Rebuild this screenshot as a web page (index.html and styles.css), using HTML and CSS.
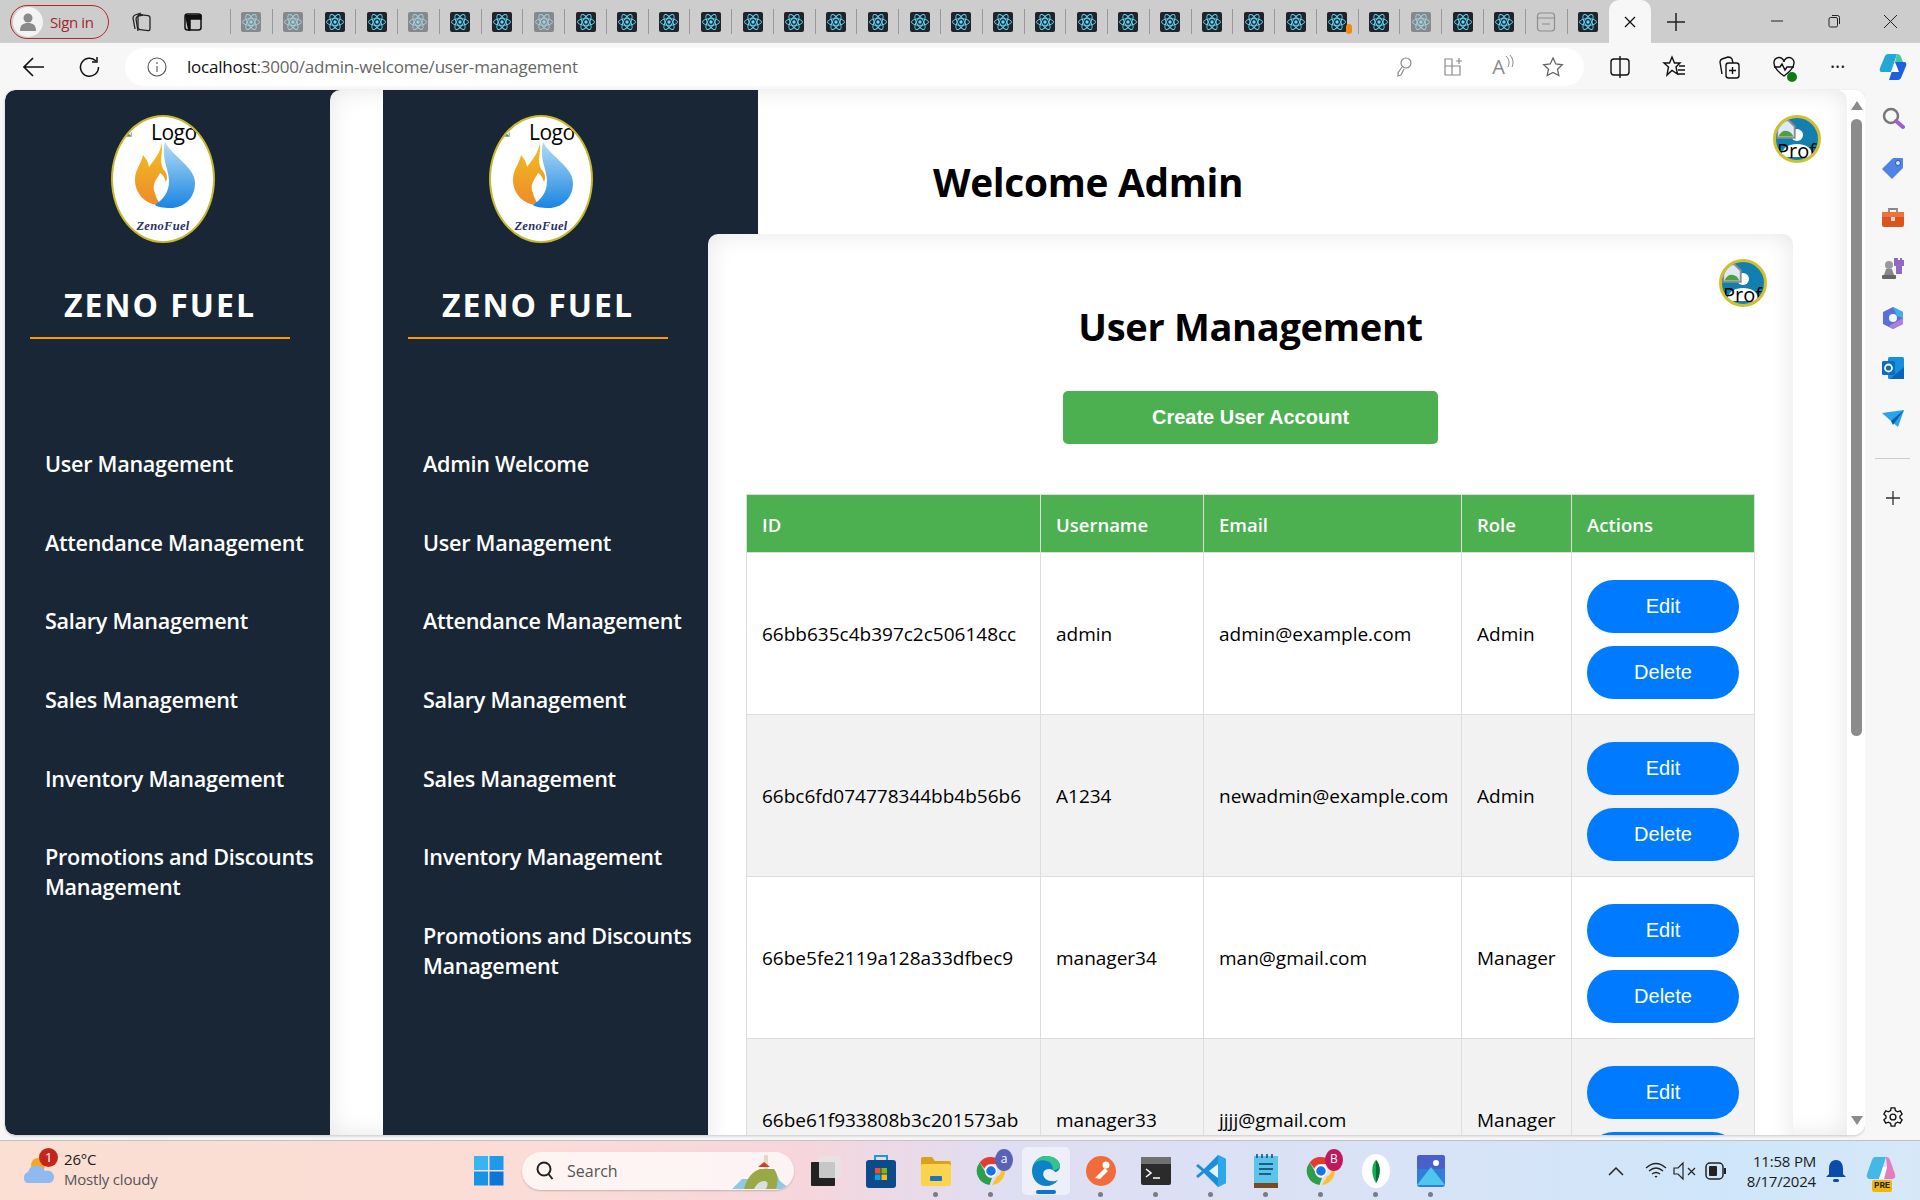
FILE: index.html
```html
<!DOCTYPE html>
<html lang="en">
<head>
    <meta charset="UTF-8">
    <title>User Management</title>
    <link rel="stylesheet" href="styles.css">
</head>
<body>
    <svg class="defs" width="0" height="0">
        <defs>
            <symbol id="react" viewBox="0 0 20 20">
                <rect width="20" height="20" rx="2" fill="#20232a"/>
                <g fill="none" stroke="#61dafb" stroke-width="0.9">
                    <ellipse cx="10" cy="10" rx="8.5" ry="3.4"/>
                    <ellipse cx="10" cy="10" rx="8.5" ry="3.4" transform="rotate(60 10 10)"/>
                    <ellipse cx="10" cy="10" rx="8.5" ry="3.4" transform="rotate(120 10 10)"/>
                </g>
                <circle cx="10" cy="10" r="1.7" fill="#61dafb"/>
            </symbol>
            <symbol id="chrome" viewBox="0 0 32 32">
                <path d="M16 2a14 14 0 0 1 12.1 7H16a7 7 0 0 0-6.6 4.6L4.7 7.4A14 14 0 0 1 16 2z" fill="#e33b2e"/>
                <path d="M28.1 9A14 14 0 0 1 17 30l5-8.5A7 7 0 0 0 22.5 9z" fill="#fbc02d"/>
                <path d="M4.7 7.4 10 16.500a7 7 0 0 0 7 6.5L14.5 29.900A14 14 0 0 1 4.7 7.4z" fill="#2e9e48"/>
                <circle cx="16" cy="16" r="5.5" fill="#1a73e8" stroke="#fff" stroke-width="1.5"/>
            </symbol>
            <symbol id="flame-logo" viewBox="0 0 104 128">
                <defs>
                    <linearGradient id="fire" x1="0" y1="0" x2="0" y2="1">
                        <stop offset="0" stop-color="#f0c020"/>
                        <stop offset="1" stop-color="#ee8a2a"/>
                    </linearGradient>
                    <linearGradient id="water" x1="0" y1="0" x2="0" y2="1">
                        <stop offset="0" stop-color="#b4dcf5"/>
                        <stop offset="1" stop-color="#1985e2"/>
                    </linearGradient>
                </defs>
                <path d="M51 28C52 38 48 44 52 54C56 58 57 62 55 67C53 61 51 59 49 58C46 64 40 70 44 78C45 84 48 86 49 90C34 90 24 78 24 65C24 54 30 50 32 40C35 44 37 46 38 52C44 44 49 38 51 28Z" fill="url(#fire)"/>
                <path d="M54 27C62 42 84 52 84 68C84 84 72 93 60 93C52 93 46 92 44 90C52 84 58 78 58 66C58 54 50 44 54 27Z" fill="url(#water)"/>
            </symbol>
            <symbol id="broken-img" viewBox="0 0 16 16">
                <path d="M1 1h9l5 5v9H1z" fill="#dfe8f5" stroke="#8d8d8d" stroke-width="1.5"/>
                <path d="M2 14c2-5 6-6 10-3l2 3z" fill="#4ea13e"/>
            </symbol>
        </defs>
    </svg>

    <div class="tabstrip">
        <div class="signin">
            <span class="signin-face">
                <svg width="22" height="22" viewBox="0 0 22 22"><circle cx="11" cy="7" r="4.5" fill="#8a8a8a"/><path d="M3 20c0-6 3-8 8-8s8 2 8 8z" fill="#8a8a8a"/></svg>
            </span>
            <span>Sign in</span>
        </div>
        <div class="strip-btn">
            <svg width="24" height="24" viewBox="0 0 24 24" fill="none" stroke="#222" stroke-width="1.3"><rect x="9" y="6" width="12" height="15" rx="2" transform="skewY(8) translate(0 -3)"/><path d="M6 19 4 8q0-2 2-3l6-2"/><path d="M9 21 7 9q0-2 2-3l5-1"/></svg>
        </div>
        <div class="strip-btn strip-btn-last">
            <svg width="22" height="22" viewBox="0 0 22 22" fill="none" stroke="#111" stroke-width="1.5"><rect x="3" y="3" width="16" height="16" rx="2.5"/><path d="M3 4.500h16V8H8v11H6" fill="#111"/></svg>
        </div>
        <div class="tabs">
            <span class="tab dim"><svg><use href="#react"/></svg></span>
            <span class="tab dim"><svg><use href="#react"/></svg></span>
            <span class="tab"><svg><use href="#react"/></svg></span>
            <span class="tab"><svg><use href="#react"/></svg></span>
            <span class="tab dim"><svg><use href="#react"/></svg></span>
            <span class="tab"><svg><use href="#react"/></svg></span>
            <span class="tab"><svg><use href="#react"/></svg></span>
            <span class="tab dim"><svg><use href="#react"/></svg></span>
            <span class="tab"><svg><use href="#react"/></svg></span>
            <span class="tab"><svg><use href="#react"/></svg></span>
            <span class="tab"><svg><use href="#react"/></svg></span>
            <span class="tab"><svg><use href="#react"/></svg></span>
            <span class="tab"><svg><use href="#react"/></svg></span>
            <span class="tab"><svg><use href="#react"/></svg></span>
            <span class="tab"><svg><use href="#react"/></svg></span>
            <span class="tab"><svg><use href="#react"/></svg></span>
            <span class="tab"><svg><use href="#react"/></svg></span>
            <span class="tab"><svg><use href="#react"/></svg></span>
            <span class="tab"><svg><use href="#react"/></svg></span>
            <span class="tab"><svg><use href="#react"/></svg></span>
            <span class="tab"><svg><use href="#react"/></svg></span>
            <span class="tab"><svg><use href="#react"/></svg></span>
            <span class="tab"><svg><use href="#react"/></svg></span>
            <span class="tab"><svg><use href="#react"/></svg></span>
            <span class="tab"><svg><use href="#react"/></svg></span>
            <span class="tab"><svg><use href="#react"/></svg></span>
            <span class="tab tab-alert"><svg><use href="#react"/></svg></span>
            <span class="tab"><svg><use href="#react"/></svg></span>
            <span class="tab dim"><svg><use href="#react"/></svg></span>
            <span class="tab"><svg><use href="#react"/></svg></span>
            <span class="tab"><svg><use href="#react"/></svg></span>
            <span class="tab">
                <svg viewBox="0 0 20 20" fill="none" stroke="#8d8d8d" stroke-width="1.2"><rect x="1.5" y="1" width="17" height="18" rx="3"/><path d="M1.5 6h17M6 12h8"/></svg>
            </span>
            <span class="tab tab-last"><svg><use href="#react"/></svg></span>
        </div>
        <div class="tab-active">
            <svg width="14" height="14" viewBox="0 0 14 14" stroke="#111" stroke-width="1.3"><path d="M2 2l10 10M12 2 2 12"/></svg>
        </div>
        <div class="new-tab">
            <svg width="20" height="20" viewBox="0 0 20 20" stroke="#222" stroke-width="1.5"><path d="M10 1v18M1 10h18"/></svg>
        </div>
        <div class="window-controls">
            <span><svg width="14" height="14" viewBox="0 0 14 14" stroke="#222"><path d="M1 7h12"/></svg></span>
            <span><svg width="14" height="14" viewBox="0 0 14 14" fill="none" stroke="#222"><rect x="2" y="3.5" width="8.5" height="9.5" rx="1.5"/><path d="M5 1.5h5.5q2 0 2 2V10"/></svg></span>
            <span><svg width="15" height="15" viewBox="0 0 15 15" stroke="#222"><path d="M1 1l13 13M14 1 1 14"/></svg></span>
        </div>
    </div>

    <div class="toolbar">
        <div class="nav-btn">
            <svg width="22" height="22" viewBox="0 0 22 22" fill="none" stroke="#111" stroke-width="1.6"><path d="M21 11H2M10 2l-9 9 9 9"/></svg>
        </div>
        <div class="nav-btn">
            <svg width="22" height="22" viewBox="0 0 22 22" fill="none" stroke="#111" stroke-width="1.5"><path d="M18 5a9 9 0 1 0 2.5 6"/><path d="M19 1v5h-5"/></svg>
        </div>
        <div class="address">
            <svg class="info-icon" width="20" height="20" viewBox="0 0 20 20" fill="none" stroke="#555" stroke-width="1.1"><circle cx="10" cy="10" r="9"/><path d="M10 9v6M10 5v2"/></svg>
            <span class="url"><b>localhost</b>:3000/admin-welcome/user-management</span>
            <div class="address-icons">
                <span><svg width="22" height="22" viewBox="0 0 22 22" fill="none" stroke="#8a8a8a" stroke-width="1.2"><circle cx="14" cy="7" r="5"/><path d="M10 11 6 17v3l3-1 3-6"/></svg></span>
                <span><svg width="22" height="22" viewBox="0 0 22 22" fill="none" stroke="#8a8a8a" stroke-width="1.2"><path d="M3 3h7v16H3zM10 10h8v9h-8zM3 10h7M17 2v6M14 5h6"/></svg></span>
                <span class="read-aloud">A<svg width="10" height="16" viewBox="0 0 10 16" fill="none" stroke="#8a8a8a"><path d="M1 2q5 5 2 11M5 1q5 6 2 12"/></svg></span>
                <span><svg width="22" height="22" viewBox="0 0 22 22" fill="none" stroke="#666" stroke-width="1.3"><path d="M11 2l2.800 6 6.500.8-4.800 4.400 1.300 6.400L11 16.400 5.200 19.600l1.300-6.400L1.700 8.800 8.200 8z"/></svg></span>
            </div>
        </div>
        <div class="toolbar-icons">
            <span><svg width="22" height="24" viewBox="0 0 22 24" fill="none" stroke="#111" stroke-width="1.4"><rect x="2" y="4" width="18" height="16" rx="3"/><path d="M11 1v22"/></svg></span>
            <span><svg width="24" height="24" viewBox="0 0 24 24" fill="none" stroke="#111" stroke-width="1.4"><path d="M10 2l2.500 6H18l-4 4 1.500 7L10 15.500 5 20l1.500-8L2 8h5.500zM17 11h6M16 15h7M15 19h8"/></svg></span>
            <span><svg width="24" height="24" viewBox="0 0 24 24" fill="none" stroke="#111" stroke-width="1.4"><rect x="9" y="8" width="13" height="15" rx="2.5"/><path d="M5 19 3 7q0-2 2-3l6-2q3 0 4 2l1 4M15.500 12v7M12 15.500h7"/></svg></span>
            <span class="health">
                <svg width="24" height="24" viewBox="0 0 24 24" fill="none" stroke="#111" stroke-width="1.4"><path d="M12 21C5 16 2 12 2 8a5 5 0 0 1 10-1 5 5 0 0 1 10 1c0 4-3 8-10 13z"/><path d="M2 12h6l2-3 3 6 2-3h7"/></svg>
                <i></i>
            </span>
            <span class="dots">&bull;&bull;&bull;</span>
            <span>
                <svg width="28" height="30" viewBox="0 0 28 30">
                    <path d="M9 2h9l-6 18H2q-2-1-1-4L6 4q1-2 3-2z" fill="#23a7d8"/>
                    <path d="M19 28h-9l6-18h10q2 1 1 4l-5 12q-1 2-3 2z" fill="#1f5fe0"/>
                    <path d="M12 20h8l-4-10-4 10z" fill="#fff"/>
                    <path d="M18 2q3 0 4 3l2 5H16z" fill="#43c9a8"/>
                </svg>
            </span>
        </div>
    </div>

    <div class="workspace">
        <div class="viewport">
            <aside class="sidebar sidebar-first">
                <div class="brand">
                    <div class="logo">
                        <svg class="logo-broken"><use href="#broken-img"/></svg>
                        <span class="logo-alt">Logo</span>
                        <svg class="logo-art"><use href="#flame-logo"/></svg>
                        <span class="logo-name">ZenoFuel</span>
                    </div>
                    <div class="brand-title">ZENO FUEL</div>
                </div>
                <nav class="side-nav">
                    <a>User Management</a>
                    <a>Attendance Management</a>
                    <a>Salary Management</a>
                    <a>Sales Management</a>
                    <a>Inventory Management</a>
                    <a>Promotions and Discounts Management</a>
                </nav>
            </aside>

            <div class="outer-page">
                <aside class="sidebar sidebar-second">
                    <div class="brand">
                        <div class="logo">
                            <svg class="logo-broken"><use href="#broken-img"/></svg>
                            <span class="logo-alt">Logo</span>
                            <svg class="logo-art"><use href="#flame-logo"/></svg>
                            <span class="logo-name">ZenoFuel</span>
                        </div>
                        <div class="brand-title">ZENO FUEL</div>
                    </div>
                    <nav class="side-nav">
                        <a>Admin Welcome</a>
                        <a>User Management</a>
                        <a>Attendance Management</a>
                        <a>Salary Management</a>
                        <a>Sales Management</a>
                        <a>Inventory Management</a>
                        <a>Promotions and Discounts Management</a>
                    </nav>
                </aside>

                <main class="admin-main">
                    <h1 class="welcome">Welcome Admin</h1>
                    <section class="card">
                        <div class="avatar">
                            <svg class="avatar-person" viewBox="0 0 48 48"><circle cx="24" cy="20" r="6" fill="#fff"/><path d="M8 42c1-10 8-13 16-13s15 3 16 13z" fill="#fff"/></svg>
                            <svg class="avatar-broken"><use href="#broken-img"/></svg>
                            <span class="avatar-alt">Profile</span>
                        </div>
                        <h2 class="card-title">User Management</h2>
                        <button class="create-btn">Create User Account</button>
                        <table class="user-table">
                            <colgroup>
                                <col class="col-id"><col class="col-name"><col class="col-email"><col class="col-role"><col class="col-actions">
                            </colgroup>
                            <thead>
                                <tr><th>ID</th><th>Username</th><th>Email</th><th>Role</th><th>Actions</th></tr>
                            </thead>
                            <tbody>
                                <tr>
                                    <td>66bb635c4b397c2c506148cc</td><td>admin</td><td>admin@example.com</td><td>Admin</td>
                                    <td><button class="row-btn">Edit</button><button class="row-btn">Delete</button></td>
                                </tr>
                                <tr>
                                    <td>66bc6fd074778344bb4b56b6</td><td>A1234</td><td>newadmin@example.com</td><td>Admin</td>
                                    <td><button class="row-btn">Edit</button><button class="row-btn">Delete</button></td>
                                </tr>
                                <tr>
                                    <td>66be5fe2119a128a33dfbec9</td><td>manager34</td><td>man@gmail.com</td><td>Manager</td>
                                    <td><button class="row-btn">Edit</button><button class="row-btn">Delete</button></td>
                                </tr>
                                <tr>
                                    <td>66be61f933808b3c201573ab</td><td>manager33</td><td>jjjj@gmail.com</td><td>Manager</td>
                                    <td><button class="row-btn">Edit</button><button class="row-btn">Delete</button></td>
                                </tr>
                            </tbody>
                        </table>
                    </section>
                </main>

                <div class="avatar">
                    <svg class="avatar-person" viewBox="0 0 48 48"><circle cx="24" cy="20" r="6" fill="#fff"/><path d="M8 42c1-10 8-13 16-13s15 3 16 13z" fill="#fff"/></svg>
                    <svg class="avatar-broken"><use href="#broken-img"/></svg>
                    <span class="avatar-alt">Profile</span>
                </div>
            </div>

            <div class="scrollbar">
                <i class="arrow-up"></i>
                <i class="thumb"></i>
                <i class="arrow-down"></i>
            </div>
        </div>

        <div class="side-panel">
            <div class="panel-icons">
                <span><svg width="24" height="24" viewBox="0 0 24 24" fill="none"><circle cx="10" cy="10" r="7" stroke="#777" stroke-width="2.5"/><path d="M15 15l7 6" stroke="#9a5fd0" stroke-width="4" stroke-linecap="round"/></svg></span>
                <span><svg width="24" height="24" viewBox="0 0 24 24"><path d="M12 2h9q1 0 1 1v9L11 23 1 13z" fill="#4f84e4"/><circle cx="17" cy="7" r="2.5" fill="#dbe7fb" stroke="#2c4fa8"/></svg></span>
                <span><svg width="24" height="24" viewBox="0 0 24 24"><path d="M8 6V3h8v3" fill="none" stroke="#888" stroke-width="1.8"/><rect x="1" y="6" width="22" height="15" rx="2" fill="#dd5320"/><rect x="1" y="6" width="22" height="5" fill="#ee7338"/><rect x="10" y="11" width="4" height="4" fill="#ddd"/></svg></span>
                <span><svg width="24" height="24" viewBox="0 0 24 24"><circle cx="8" cy="9" r="4" fill="#999"/><path d="M5 13h6l2 6H3z" fill="#888"/><rect x="1" y="19" width="14" height="4" rx="1" fill="#666"/><path d="M15 2h2v2h2V2h2v2h2v6h-2v8h-6v-8h-2V2z" fill="#9068c8"/></svg></span>
                <span><svg width="24" height="24" viewBox="0 0 24 24"><path d="M12 1 22 6v12l-10 5L2 18V6z" fill="#5a6fd8"/><path d="M12 1 22 6v6l-6-2z" fill="#3bb3e8"/><path d="M22 12v6l-10 5-4-3z" fill="#b080e0"/><circle cx="12" cy="12" r="4" fill="#f7f7f7"/></svg></span>
                <span><svg width="24" height="24" viewBox="0 0 24 24"><rect x="7" y="1" width="16" height="22" rx="1.5" fill="#1490df"/><path d="M23 11v12H9z" fill="#0a64b4"/><rect x="1" y="5" width="13" height="14" rx="1.5" fill="#0a6cc4"/><circle cx="7.5" cy="12" r="3.5" fill="none" stroke="#fff" stroke-width="1.8"/></svg></span>
                <span><svg width="24" height="24" viewBox="0 0 24 24"><path d="M1 7l22-3-6 17-7-6z" fill="#2aa3ec"/><path d="M10 15l13-11-11 15z" fill="#0e5ca8"/></svg></span>
            </div>
            <hr class="panel-rule">
            <div class="panel-add">
                <svg width="16" height="16" viewBox="0 0 16 16" stroke="#333" stroke-width="1.3"><path d="M8 1v14M1 8h14"/></svg>
            </div>
            <div class="panel-settings">
                <svg width="22" height="22" viewBox="0 0 24 24" fill="none" stroke="#111" stroke-width="1.5"><circle cx="12" cy="12" r="3.2"/><path d="M10 2h4l.6 3 2.400 1.400 2.900-1 2 3.500-2.300 2v2.200l2.300 2-2 3.500-2.900-1-2.400 1.400-.6 3h-4l-.6-3L7 17.600l-2.900 1-2-3.500 2.300-2v-2.200l-2.300-2 2-3.500 2.900 1L9.400 5z"/></svg>
            </div>
        </div>
    </div>

    <footer class="taskbar">
        <div class="weather">
            <span class="weather-icon">
                <svg width="32" height="36" viewBox="0 0 32 36"><circle cx="14" cy="12" r="7" fill="#f5a623"/><path d="M3 30a6 6 0 0 1 1-11 9 9 0 0 1 17-1 6.5 6.5 0 0 1 5 12z" fill="#8fb9ef"/></svg>
                <i class="weather-badge">1</i>
            </span>
            <div class="weather-text">
                <div>26&deg;C</div>
                <div class="weather-sub">Mostly cloudy</div>
            </div>
        </div>
        <div class="task-center">
            <span class="task-slot">
                <svg width="30" height="30" viewBox="0 0 30 30"><rect width="14" height="14" fill="#36b5f0"/><rect x="15.5" width="14" height="14" fill="#1f9ae8"/><rect y="15.5" width="14" height="14" fill="#1593e6"/><rect x="15.5" y="15.5" width="14" height="14" fill="#0a76d8"/></svg>
            </span>
            <div class="task-search">
                <svg width="20" height="20" viewBox="0 0 20 20" fill="none" stroke="#222" stroke-width="2"><circle cx="9" cy="8" r="6.5"/><path d="M13.5 13l4 5"/></svg>
                <span>Search</span>
                <svg class="search-art" width="58" height="36" viewBox="0 0 58 36"><path d="M0 36 10 26h14l6-10h12l6 12 10 8z" fill="#8fc9e2"/><path d="M12 36q4-16 16-20h14q6 8 2 20z" fill="#9aa845"/><path d="M22 36q4-8 10-8t2 8z" fill="#d6e0e2"/><rect x="32" y="2" width="4" height="14" fill="#e8d6c0"/><path d="M26 14l6-5 6 5z" fill="#c6422c"/></svg>
            </div>
            <span class="task-slot task-slot-first">
                <svg width="30" height="30" viewBox="0 0 30 30"><rect x="0" y="6" width="24" height="24" rx="1" fill="#222"/><rect x="8" y="0" width="22" height="22" rx="1" fill="#e4e4e4" opacity="0.85"/></svg>
            </span>
            <span class="task-slot">
                <svg width="30" height="34" viewBox="0 0 30 34"><path d="M9 6V2h12v4" fill="none" stroke="#1b98e0" stroke-width="2"/><rect y="6" width="30" height="28" rx="3" fill="#0c4a8c"/><rect x="9" y="14" width="5.5" height="5.5" fill="#f25022"/><rect x="15.5" y="14" width="5.5" height="5.5" fill="#7fba00"/><rect x="9" y="20.5" width="5.5" height="5.5" fill="#00a4ef"/><rect x="15.5" y="20.5" width="5.5" height="5.5" fill="#ffb900"/></svg>
            </span>
            <span class="task-slot open">
                <svg width="30" height="30" viewBox="0 0 30 30"><path d="M0 3q0-2 2-2h9l3 4h14q2 0 2 2v5H0z" fill="#d9a21b"/><rect y="8" width="30" height="22" rx="2" fill="#fbd34d"/><rect x="9" y="20" width="12" height="5" rx="1" fill="#1b74c4"/></svg>
            </span>
            <span class="task-slot open">
                <svg class="task-svg"><use href="#chrome"/></svg>
                <i class="profile-dot dot-purple">a</i>
            </span>
            <span class="task-slot open active">
                <svg width="30" height="32" viewBox="0 0 30 32"><path d="M15 1C7 1 1 8 1 16c0 9 7 15 14 15 5 0 9-2 12-6-4 2-11 2-14-3-2-4 0-8 5-8 4 0 6 3 6 3 2 0 5-2 5-6C29 5 22 1 15 1z" fill="#0c83c9"/><path d="M29 11C29 5 22 1 15 1 9 1 5 4 3 9c3-3 8-5 13-3 4 1 6 5 6 9 4 0 7-2 7-4z" fill="#35c48d"/></svg>
            </span>
            <span class="task-slot open">
                <svg width="30" height="30" viewBox="0 0 30 30"><circle cx="15" cy="15" r="15" fill="#f26b3a"/><path d="M9 22l10-10 3 3-8 8z" fill="#fff"/><circle cx="20" cy="9" r="3.5" fill="#fff"/></svg>
            </span>
            <span class="task-slot open">
                <svg width="30" height="28" viewBox="0 0 30 28"><rect width="30" height="28" rx="2" fill="#2b2b2b"/><rect width="30" height="7" fill="#707070"/><path d="M5 12l5 4-5 4" fill="none" stroke="#fff" stroke-width="1.5"/><path d="M12 21h7" stroke="#fff" stroke-width="1.5"/></svg>
            </span>
            <span class="task-slot open">
                <svg width="30" height="32" viewBox="0 0 30 32"><path d="M22 0 30 4v24l-8 4L8 18l-6 5-2-2 6-5-6-5 2-2 6 5z" fill="#1a8fd8"/><path d="M22 0v32l8-4V4z" fill="#2ba8ec"/><path d="M22 9 13 16l9 7z" fill="#e8f2fa"/></svg>
            </span>
            <span class="task-slot open">
                <svg width="26" height="34" viewBox="0 0 26 34"><rect x="1" y="2" width="24" height="28" fill="#5cc4e8"/><rect x="1" y="29" width="24" height="5" fill="#7a4a22"/><path d="M6 10h14M6 15h14M6 20h12" stroke="#1b5e86" stroke-width="2"/><path d="M4 0v4M9 0v4M14 0v4M19 0v4" stroke="#0b4a70" stroke-width="1.5"/></svg>
            </span>
            <span class="task-slot open">
                <svg class="task-svg"><use href="#chrome"/></svg>
                <i class="profile-dot dot-crimson">B</i>
            </span>
            <span class="task-slot open">
                <svg width="28" height="34" viewBox="0 0 28 34"><ellipse cx="14" cy="17" rx="14" ry="17" fill="#fff"/><path d="M14 6c5 5 5 15 0 23-5-8-5-18 0-23z" fill="#13aa52"/><path d="M14 6c5 5 5 15 0 23z" fill="#0b6b35"/></svg>
            </span>
            <span class="task-slot open">
                <svg width="28" height="32" viewBox="0 0 28 32"><rect width="28" height="32" rx="3" fill="#2f7fd8"/><rect width="28" height="14" rx="3" fill="#4a5fc8"/><path d="M0 30 14 12l14 18z" fill="#4ec7ee"/><circle cx="19" cy="8" r="3" fill="#fff"/></svg>
            </span>
        </div>
        <div class="tray">
            <svg class="tray-chevron" width="16" height="10" viewBox="0 0 16 10" fill="none" stroke="#222" stroke-width="1.5"><path d="M1 9l7-7 7 7"/></svg>
            <svg class="tray-wifi" width="22" height="20" viewBox="0 0 22 20" fill="none" stroke="#222" stroke-width="1.3"><path d="M1 7q10-9 20 0M4 10q7-6 14 0M7 13q4-3 8 0M10 16q1-1 2 0"/></svg>
            <svg class="tray-volume" width="24" height="20" viewBox="0 0 24 20" fill="none" stroke="#222" stroke-width="1.2"><path d="M1 7h4l5-5v16l-5-5H1zM15 7l7 7M22 7l-7 7"/></svg>
            <svg class="tray-battery" width="22" height="20" viewBox="0 0 22 20"><rect x="1" y="2" width="17" height="16" rx="4" fill="none" stroke="#222" stroke-width="1.5"/><rect x="4" y="5" width="8" height="10" rx="1" fill="#222"/><rect x="19" y="7" width="2" height="6" fill="#222"/></svg>
            <div class="clock">
                <div>11:58 PM</div>
                <div>8/17/2024</div>
            </div>
            <svg class="tray-bell" width="20" height="24" viewBox="0 0 20 24"><path d="M10 1c5 0 7 4 7 9v5l3 3H0l3-3v-5c0-5 2-9 7-9z" fill="#0a4ca8"/><rect x="7" y="20" width="6" height="3" rx="1.5" fill="#0a4ca8"/></svg>
            <span class="tray-copilot">
                <svg width="30" height="30" viewBox="0 0 30 30"><path d="M9 1h11l-7 22H3Q0 22 1 18L6 4q1-3 3-3z" fill="#46b8e8"/><path d="M20 1q3 0 4 3l5 14q1 4-2 5H17l4-12z" fill="#e67cc0"/><path d="M13 23l4-12h4l-3 12z" fill="#fff"/></svg>
                <i>PRE</i>
            </span>
        </div>
    </footer>
</body>
</html>
```

FILE: styles.css
```css
* {
    box-sizing: border-box;
}

html, body {
    margin: 0;
    padding: 0;
    height: 100%;
}

body {
    width: 1920px;
    height: 1200px;
    overflow: hidden;
    display: flex;
    flex-direction: column;
    font-family: "Open Sans", "Noto Sans", sans-serif;
    background: #f7f7f7;
    color: #000;
}

.defs {
    position: absolute;
}

/* browser tab strip */
.tabstrip {
    height: 43px;
    flex: none;
    background: #cdcdcd;
    display: flex;
    align-items: center;
    position: relative;
}

.signin {
    width: 99px;
    height: 34px;
    margin-left: 10px;
    padding-left: 2px;
    display: flex;
    align-items: center;
    gap: 7px;
    border: 1px solid #b3262a;
    border-radius: 17px;
    color: #a3282c;
    font-size: 15px;
    letter-spacing: -0.4px;
}

.signin-face {
    width: 30px;
    height: 30px;
    border-radius: 50%;
    background: #f3f3f3;
    display: flex;
    align-items: center;
    justify-content: center;
}

.strip-btn {
    width: 24px;
    height: 24px;
    margin-left: 20px;
    display: flex;
    align-items: center;
    justify-content: center;
}

.strip-btn-last {
    margin-left: 28px;
}

.tabs {
    display: flex;
    align-items: center;
    margin-left: 25px;
    border-left: 1px solid #999;
}

.tab {
    width: 41.78px;
    height: 25px;
    display: flex;
    align-items: center;
    justify-content: center;
    border-right: 1px solid #999;
    position: relative;
}

.tab svg {
    width: 20px;
    height: 20px;
}

.tab.dim svg {
    opacity: 0.4;
}

.tab-last {
    border-right: none;
}

.tab-alert::after {
    content: "";
    position: absolute;
    right: 6px;
    bottom: 0;
    width: 6px;
    height: 10px;
    border-radius: 3px;
    background: #f28a10;
}

.tab-active {
    width: 42px;
    height: 43px;
    background: #f7f7f7;
    border-radius: 10px 10px 0 0;
    display: flex;
    align-items: center;
    justify-content: center;
}

.new-tab {
    width: 20px;
    margin-left: 15px;
    display: flex;
}

.window-controls {
    margin-left: auto;
    margin-right: 1px;
    display: flex;
}

.window-controls span {
    width: 57px;
    display: flex;
    justify-content: center;
}

/* address bar row */
.toolbar {
    height: 47px;
    flex: none;
    background: #f7f7f7;
    display: flex;
    align-items: center;
}

.nav-btn {
    width: 55px;
    margin-left: 7px;
    margin-right: -7px;
    display: flex;
    justify-content: center;
}

.address {
    width: 1460px;
    height: 38px;
    margin-left: 15px;
    background: #fff;
    border-radius: 19px;
    display: flex;
    align-items: center;
    padding: 0 6px 0 22px;
}

.url {
    margin-left: 20px;
    font-size: 17px;
    letter-spacing: -0.2px;
    color: #666;
}

.url b {
    font-weight: 400;
    color: #111;
}

.address-icons {
    margin-left: auto;
    display: flex;
}

.address-icons span {
    width: 50px;
    display: flex;
    justify-content: center;
    align-items: center;
}

.read-aloud {
    font-size: 20px;
    color: #8a8a8a;
}

.read-aloud svg {
    margin-bottom: 10px;
}

.toolbar-icons {
    margin-left: 8px;
    display: flex;
}

.toolbar-icons span {
    width: 54.6px;
    display: flex;
    justify-content: center;
    align-items: center;
    position: relative;
}

.health i {
    position: absolute;
    right: 14px;
    bottom: 0;
    width: 10px;
    height: 10px;
    border-radius: 50%;
    background: #107c10;
}

.toolbar-icons .dots {
    font-size: 11px;
    letter-spacing: 1px;
    color: #222;
}

/* page inside the browser */
.workspace {
    height: 1050px;
    flex: none;
    display: flex;
    align-items: flex-start;
}

.viewport {
    width: 1860px;
    height: 1045px;
    margin-left: 5px;
    display: flex;
    background: #fff;
    overflow: hidden;
    border-radius: 10px 10px 12px 10px;
    box-shadow: 0 1px 3px rgba(0, 0, 0, 0.2);
}

.sidebar {
    flex: none;
    background: #182635;
    color: #fff;
    padding: 25px 0 0 25px;
}

.sidebar-first {
    width: 335px;
    border-radius: 10px 0 0 10px;
}

.sidebar-second {
    width: 375px;
}

.brand {
    width: 260px;
}

.logo {
    width: 104px;
    height: 128px;
    margin: 0 auto;
    position: relative;
    left: 3px;
    background: #fff;
    border: 2px solid #c8b72e;
    border-radius: 50%;
    overflow: hidden;
    color: #000;
}

.logo-art {
    position: absolute;
    left: -2px;
    top: -2px;
    width: 104px;
    height: 128px;
}

.logo-broken {
    position: absolute;
    left: 12px;
    top: 13px;
    width: 7px;
    height: 7px;
}

.logo-alt {
    position: absolute;
    left: 38px;
    top: 1px;
    z-index: 1;
    font-size: 21px;
    line-height: 28px;
    letter-spacing: -0.5px;
}

.logo-name {
    position: absolute;
    left: 0;
    right: 0;
    top: 102px;
    text-align: center;
    font-family: "Liberation Serif", serif;
    font-weight: 700;
    font-style: italic;
    font-size: 12.5px;
    letter-spacing: 0.3px;
    color: #28306e;
}

.brand-title {
    margin-top: 42px;
    padding-bottom: 12px;
    border-bottom: 2px solid #f90;
    text-align: center;
    font-size: 32px;
    line-height: 40px;
    font-weight: 700;
    letter-spacing: 2px;
}

.side-nav {
    margin-top: 85.5px;
    padding-left: 15px;
}

.side-nav a {
    display: block;
    width: 285px;
    padding: 24.35px 0;
    font-size: 21.6px;
    line-height: 30px;
    font-weight: 600;
    letter-spacing: -0.28px;
}

.outer-page {
    flex: 1;
    margin-left: -10px;
    padding-left: 53px;
    display: flex;
    position: relative;
    z-index: 1;
    background: #fff;
    border-radius: 10px 10px 0 0;
    box-shadow: inset 0 0 24px rgba(0, 0, 0, 0.1);
}

.admin-main {
    flex: 1;
    min-width: 0;
}

.welcome {
    height: 144px;
    margin: 0;
    padding: 67px 0 0 175px;
    font-size: 38.8px;
    line-height: 50px;
    font-weight: 700;
    letter-spacing: -0.3px;
}

.card {
    margin: 0 54px 0 -50px;
    height: 1000px;
    padding: 67px 38px 0;
    position: relative;
    background: #fff;
    border-radius: 10px;
    box-shadow: inset 0 0 24px rgba(0, 0, 0, 0.1);
}

.card-title {
    margin: 0;
    text-align: center;
    font-size: 38px;
    line-height: 50px;
    font-weight: 700;
    letter-spacing: -0.3px;
}

.create-btn {
    display: block;
    width: 375px;
    height: 53px;
    margin: 40px auto 50px;
    border: none;
    border-radius: 5px;
    background: #4caf50;
    color: #fff;
    font-family: "Liberation Sans", Arial, sans-serif;
    font-size: 20px;
    font-weight: 700;
    cursor: pointer;
}

.user-table {
    width: 1008px;
    table-layout: fixed;
    border-collapse: collapse;
    font-size: 19px;
}

.col-id { width: 294px; }
.col-name { width: 163px; }
.col-email { width: 258px; }
.col-role { width: 110px; }
.col-actions { width: 183px; }

.user-table th,
.user-table td {
    border: 1px solid #ddd;
    padding: 0 15px;
    text-align: left;
    white-space: nowrap;
}

.user-table th {
    height: 58px;
    padding-top: 2px;
    background: #4caf50;
    color: #fff;
    font-size: 18.5px;
    font-weight: 600;
}

.user-table td {
    height: 162px;
}

.user-table td:last-child {
    padding-top: 14px;
    padding-bottom: 15px;
}

.user-table tbody tr:nth-child(even) {
    background: #f2f2f2;
}

.row-btn {
    display: block;
    width: 152px;
    height: 53px;
    margin-top: 13px;
    border: none;
    border-radius: 26.5px;
    background: #007bff;
    color: #fff;
    font-family: "Liberation Sans", Arial, sans-serif;
    font-size: 20px;
    cursor: pointer;
}

/* round profile picture, sits over the page corner */
.avatar {
    position: absolute;
    top: 25px;
    right: 26px;
    z-index: 2;
    width: 48px;
    height: 48px;
    border: 3px solid #cfc02f;
    border-radius: 50%;
    background: #127fae;
    overflow: hidden;
}

.avatar-person {
    position: absolute;
    left: -3px;
    top: -3px;
    width: 48px;
    height: 48px;
}

.avatar-broken {
    position: absolute;
    left: 0;
    top: 1px;
    width: 20px;
    height: 20px;
}

.avatar-alt {
    position: absolute;
    left: 1px;
    top: 21px;
    font-size: 20px;
    line-height: 24px;
    white-space: nowrap;
}

.scrollbar {
    width: 19px;
    flex: none;
    position: relative;
    display: flex;
    flex-direction: column;
    align-items: center;
    background: #fff;
}

.thumb {
    width: 11px;
    height: 617px;
    margin-top: 9px;
    border-radius: 6px;
    background: #8c8c8c;
}

.arrow-up,
.arrow-down {
    width: 0;
    height: 0;
    border-left: 6px solid transparent;
    border-right: 6px solid transparent;
}

.arrow-up {
    margin-top: 11px;
    border-bottom: 9px solid #8c8c8c;
}

.arrow-down {
    margin-top: auto;
    margin-bottom: 10px;
    border-top: 9px solid #8c8c8c;
}

/* edge side panel */
.side-panel {
    width: 55px;
    height: 1050px;
    flex: none;
    display: flex;
    flex-direction: column;
    align-items: center;
    background: #f7f7f7;
}

.panel-icons {
    margin-top: 3px;
}

.panel-icons span {
    display: flex;
    height: 50px;
    align-items: center;
    justify-content: center;
}

.panel-rule {
    width: 35px;
    margin: 15px 0 0;
    border: none;
    border-top: 1px solid #ccc;
}

.panel-add {
    margin-top: 31px;
    display: flex;
}

.panel-settings {
    margin-top: auto;
    margin-bottom: 12px;
    display: flex;
}

/* windows taskbar */
.taskbar {
    height: 60px;
    flex: none;
    display: flex;
    align-items: center;
    position: relative;
    border-top: 1px solid #c3bfc4;
    background: linear-gradient(90deg, #fadfd2 0%, #fbdcd6 28%, #f6d6dc 42%, #dfdef2 52%, #d9e2f6 72%, #cfe6fa 90%, #d6e8f8 100%);
}

.weather {
    width: 461px;
    padding-left: 24px;
    display: flex;
    align-items: center;
    gap: 8px;
    font-size: 15px;
    line-height: 20px;
    letter-spacing: -0.2px;
    color: #1b1b1b;
}

.weather-icon {
    position: relative;
    display: flex;
}

.weather-badge {
    position: absolute;
    left: 15px;
    top: -5px;
    width: 19px;
    height: 19px;
    border-radius: 50%;
    background: #c4261d;
    color: #fff;
    font-style: normal;
    font-size: 13px;
    line-height: 19px;
    text-align: center;
}

.weather-text {
    margin-top: -3px;
}

.weather-sub {
    color: #555;
}

.task-center {
    display: flex;
    align-items: center;
}

.task-slot {
    width: 55px;
    height: 48px;
    display: flex;
    align-items: center;
    justify-content: center;
    position: relative;
}

.task-slot-first {
    margin-left: 4px;
}

.task-slot.open::after {
    content: "";
    position: absolute;
    left: 25px;
    bottom: -2px;
    width: 5px;
    height: 5px;
    border-radius: 50%;
    background: #7b7b85;
}

.task-slot.active {
    width: 48px;
    margin: 0 3.5px;
    border-radius: 5px;
    background: rgba(255, 255, 255, 0.5);
}

.task-slot.active::after {
    left: 14px;
    bottom: 1px;
    width: 20px;
    height: 4px;
    border-radius: 2px;
    background: #0a74d0;
}

.task-svg {
    width: 32px;
    height: 32px;
}

.profile-dot {
    position: absolute;
    right: 5px;
    top: 2px;
    width: 18px;
    height: 22px;
    border-radius: 50%;
    color: #fff;
    font-style: normal;
    font-size: 12px;
    line-height: 20px;
    text-align: center;
}

.dot-purple {
    background: #5a62b8;
}

.dot-crimson {
    background: #c2185b;
}

.task-search {
    width: 272px;
    height: 38px;
    margin-left: 6px;
    padding-left: 13px;
    display: flex;
    align-items: center;
    gap: 12px;
    position: relative;
    overflow: hidden;
    border-radius: 19px;
    background: rgba(255, 255, 255, 0.7);
    box-shadow: 0 1px 2px rgba(0, 0, 0, 0.2);
    font-size: 16px;
    color: #555;
}

.search-art {
    position: absolute;
    right: 4px;
    bottom: 1px;
}

.tray {
    margin-left: auto;
    width: 320px;
    height: 100%;
    display: flex;
    align-items: center;
    padding-left: 8px;
}

.tray-wifi {
    margin-left: 21px;
}

.tray-volume {
    margin-left: 6px;
}

.tray-battery {
    margin-left: 8px;
}

.clock {
    width: 89px;
    text-align: right;
    font-size: 15px;
    line-height: 20px;
    letter-spacing: -0.2px;
    color: #1b1b1b;
}

.tray-bell {
    margin-left: 10px;
}

.tray-copilot {
    margin-left: 20px;
    position: relative;
    display: flex;
}

.tray-copilot i {
    position: absolute;
    left: 6px;
    bottom: -6px;
    padding: 0 2px;
    background: #f2b705;
    border-radius: 2px;
    font-style: normal;
    font-size: 9px;
    line-height: 12px;
    font-weight: 700;
    font-family: "Liberation Mono", monospace;
    color: #222;
}
```
